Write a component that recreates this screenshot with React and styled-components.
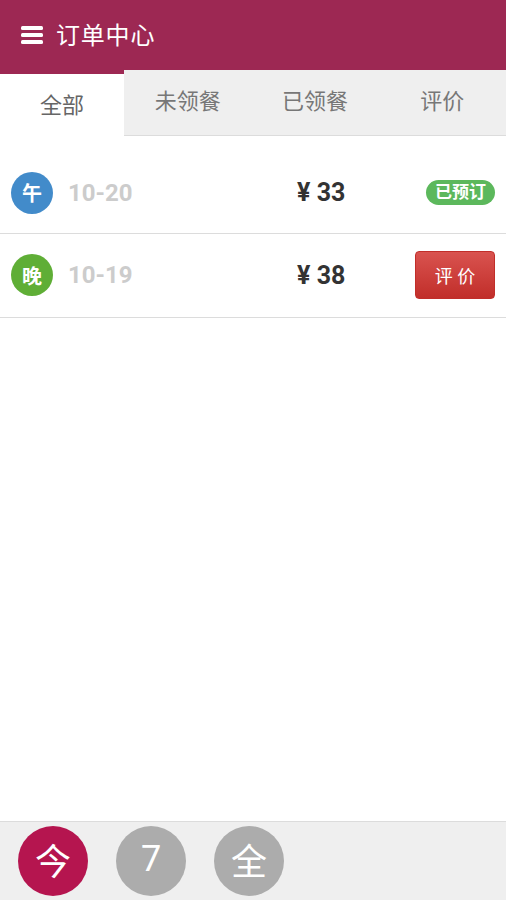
import styled, { createGlobalStyle } from "styled-components";
import { useState } from "react";

const GlobalStyle = createGlobalStyle`
    html, body {
        margin: 0;
        padding: 0;
        background: #fff;
        font-family: Roboto, "Noto Sans CJK SC", sans-serif;
    }
    * { box-sizing: border-box; }
`

const tabs = ['全部', '未领餐', '已领餐', '评价']

const orders = [
    { meal: '午', color: '#428bca', date: '10-20', price: 33, status: 'booked' },
    { meal: '晚', color: '#5fae36', date: '10-19', price: 38, status: 'review' },
]

const ranges = ['今', '7', '全']

const App = () => {
    const [activeTab, setActiveTab] = useState(0)
    const [range, setRange] = useState(0)

    return (
        <Page>
            <GlobalStyle />
            <Header>
                <MenuIcon width="22" height="18" viewBox="0 0 22 18">
                    <rect x="0" y="0" width="22" height="4" rx="1.5" fill="#fff" />
                    <rect x="0" y="7" width="22" height="4" rx="1.5" fill="#fff" />
                    <rect x="0" y="14" width="22" height="4" rx="1.5" fill="#fff" />
                </MenuIcon>
                <Title>订单中心</Title>
            </Header>
            <TabBar>
                {tabs.map((t, i) => (
                    <Tab key={t} $active={activeTab === i} onClick={() => setActiveTab(i)}>{t}</Tab>
                ))}
            </TabBar>
            <List>
                {orders.map(o => (
                    <Row key={o.date}>
                        <Meal $color={o.color}>{o.meal}</Meal>
                        <Date>{o.date}</Date>
                        <Price>¥ {o.price}</Price>
                        <Action>
                            {o.status === 'booked'
                                ? <Badge>已预订</Badge>
                                : <ReviewButton>评 价</ReviewButton>}
                        </Action>
                    </Row>
                ))}
            </List>
            <Footer>
                {ranges.map((r, i) => (
                    <RangeButton key={r} $active={range === i} onClick={() => setRange(i)}>{r}</RangeButton>
                ))}
            </Footer>
        </Page>
    );
}

const Page = styled.div`
    height: 900px;
    display: flex;
    flex-direction: column;
    overflow: hidden;
`

const Header = styled.div`
    height: 70px;
    background: #9d2853;
    display: flex;
    align-items: center;
    padding: 0 0 4px 21px;
    gap: 13px;
`

const MenuIcon = styled.svg`
    flex-shrink: 0;
    margin-top: 4px;
`

const Title = styled.h1`
    margin: 0;
    color: #fff;
    font-size: 24px;
    font-weight: 400;
    letter-spacing: 0.8px;
`

const TabBar = styled.div`
    display: grid;
    grid-template-columns: 124px 1fr 1fr 1fr;
    height: 66px;
`

const Tab = styled.div`
    display: flex;
    align-items: center;
    justify-content: center;
    font-size: 22px;
    color: ${p => p.$active ? '#666' : '#777'};
    background: ${p => p.$active ? '#fff' : '#efefef'};
    border-top: ${p => p.$active ? '4px solid #9d2853' : '0'};
    border-bottom: ${p => p.$active ? '0' : '1px solid #dcdcdc'};
    padding-bottom: ${p => p.$active ? '5px' : '8px'};
    cursor: pointer;
`

const List = styled.div`
    margin-top: 17px;
    flex: 1;
`

const Row = styled.div`
    display: flex;
    align-items: center;
    min-height: 81px;
    padding: 17px 11px 18px;
    border-bottom: 1px solid #dcdcdc;
`

const Meal = styled.div`
    width: 42px;
    height: 42px;
    border-radius: 50%;
    background: ${p => p.$color};
    color: #fff;
    font-size: 20px;
    font-weight: 700;
    display: flex;
    align-items: center;
    justify-content: center;
    flex-shrink: 0;
`

const Date = styled.div`
    margin-left: 15px;
    width: 229px;
    font-size: 24px;
    font-weight: 700;
    color: #ccc;
`

const Price = styled.div`
    font-size: 25px;
    font-weight: 700;
    color: #333;
`

const Action = styled.div`
    margin-left: auto;
    display: flex;
    align-items: center;
`

const Badge = styled.span`
    background: #5cb85c;
    color: #fff;
    font-size: 17px;
    font-weight: 700;
    padding: 1px 9px 2px;
    border-radius: 13px;
    line-height: 22px;
`

const ReviewButton = styled.button`
    width: 80px;
    height: 48px;
    border: 1px solid #c12e2a;
    border-radius: 4px;
    background: linear-gradient(#d9534f, #c12e2a);
    color: #fff;
    font-family: inherit;
    font-size: 18px;
    cursor: pointer;
`

const Footer = styled.div`
    height: 79px;
    background: #efefef;
    border-top: 1px solid #dcdcdc;
    display: flex;
    align-items: center;
    gap: 28px;
    padding-left: 18px;
`

const RangeButton = styled.div`
    width: 70px;
    height: 70px;
    border-radius: 50%;
    background: ${p => p.$active ? '#b5154f' : '#acacac'};
    color: #fff;
    font-size: 36px;
    font-weight: 400;
    display: flex;
    align-items: center;
    justify-content: center;
    padding-bottom: 4px;
    cursor: pointer;
`

export default App;
